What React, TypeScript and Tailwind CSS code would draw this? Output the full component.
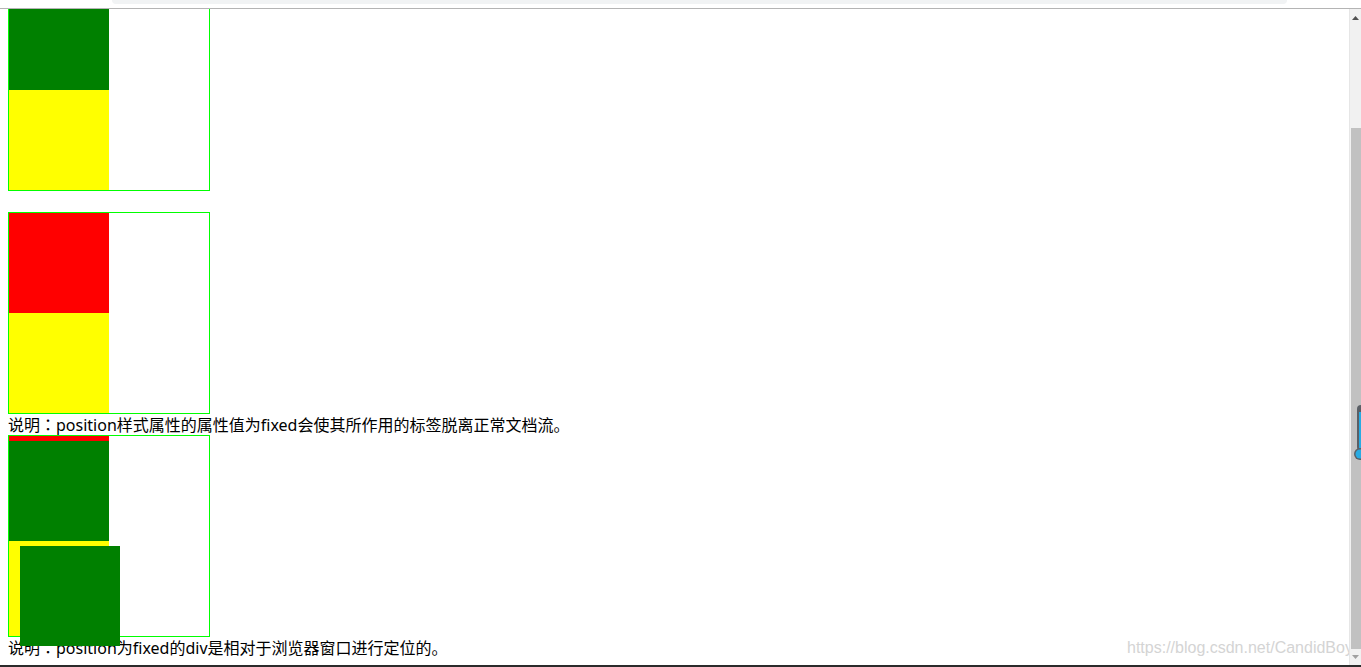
import React from "react";

const font = {
  fontFamily: '"Microsoft YaHei", "Noto Sans", "Noto Sans CJK SC", sans-serif',
};

const colonFont = {
  fontFamily: '"Noto Sans CJK JP", sans-serif',
};

function Box({ top, bottom }: { top: string; bottom: string }) {
  return (
    <div className="w-[202px] h-[202px] border border-[#00ff00] shrink-0">
      <div className={`w-[100px] h-[100px] ${top}`} />
      <div className={`w-[100px] h-[100px] ${bottom}`} />
    </div>
  );
}

export default function App() {
  return (
    <div
      className="relative w-[1361px] h-[667px] overflow-hidden bg-white flex flex-col text-black"
      style={font}
    >
      {/* browser chrome remnant */}
      <div className="h-[9px] shrink-0 border-b border-[#b4b4b4] relative">
        <div className="absolute left-[112px] w-[1175px] top-0 h-[4px] bg-[#f1f3f4] rounded-b-[6px]" />
      </div>

      <div className="flex flex-1 min-h-0">
        {/* page content */}
        <div className="relative flex-1 overflow-hidden">
          <div className="flex flex-col pl-[8px] mt-[-20px] text-[16px] leading-[21px]">
            <div className="w-[202px] h-[202px] border border-[#00ff00] shrink-0">
              <div className="w-[100px] h-[100px] bg-[#008000]" />
              <div className="w-[100px] h-[100px] bg-[#ffff00]" />
            </div>
            <div className="mt-[21px]">
              <Box top="bg-[#ff0000]" bottom="bg-[#ffff00]" />
            </div>
            <div className="whitespace-nowrap h-[21px]">
              说明<span style={colonFont}>：</span>position样式属性的属性值为fixed会使其所作用的标签脱离正常文档流。
            </div>
            <div className="relative w-[202px] h-[202px] border border-[#00ff00] shrink-0">
              <div className="w-[100px] h-[100px] bg-[#ff0000]" />
              <div className="w-[100px] h-[100px] bg-[#ffff00]" />
              <div className="absolute left-0 top-[5px] w-[100px] h-[100px] bg-[#008000]" />
            </div>
            <div className="whitespace-nowrap h-[21px]">
              说明<span style={colonFont}>：</span>position为fixed的div是相对于浏览器窗口进行定位的。
            </div>
          </div>

          {/* fixed green square */}
          <div className="absolute left-[20px] top-[537px] w-[100px] h-[100px] bg-[#008000]" />

          {/* watermark */}
          <div
            className="absolute left-[1127px] top-[629px] whitespace-nowrap text-[16px] leading-[20px] text-[#d4d4d4]"
            style={{ fontFamily: '"Liberation Sans", Arial, sans-serif' }}
          >
            https://blog.csdn.net/CandidBoy
          </div>
        </div>

        {/* scrollbar */}
        <div className="w-[12px] shrink-0 bg-[#f1f1f1] border-l border-[#e6e6e6] flex flex-col items-center">
          <div className="h-[18px] w-full flex items-center justify-center">
            <svg width="7" height="4" viewBox="0 0 7 4">
              <path d="M3.5 0 L7 4 L0 4 Z" fill="#505050" />
            </svg>
          </div>
          <div className="mt-[101px] w-[10px] flex-1 bg-[#c1c1c1]" />
          <div className="h-[16px] w-full flex items-center justify-center">
            <svg width="7" height="4" viewBox="0 0 7 4">
              <path d="M0 0 L7 0 L3.5 4 Z" fill="#a0a0a0" />
            </svg>
          </div>
        </div>
      </div>

      <div className="h-[2px] shrink-0 bg-[#2b2b2b]" />

      {/* thermometer widget at right edge */}
      <svg
        className="absolute left-[1354px] top-[404px]"
        width="14"
        height="58"
        viewBox="0 0 14 58"
      >
        <rect x="3" y="1" width="10" height="46" rx="4" fill="#5a5f66" />
        <rect x="5" y="8" width="8" height="40" fill="#29abe2" />
        <circle cx="6" cy="50" r="6" fill="#5a5f66" />
        <circle cx="6" cy="50" r="4.5" fill="#29abe2" />
      </svg>
    </div>
  );
}
